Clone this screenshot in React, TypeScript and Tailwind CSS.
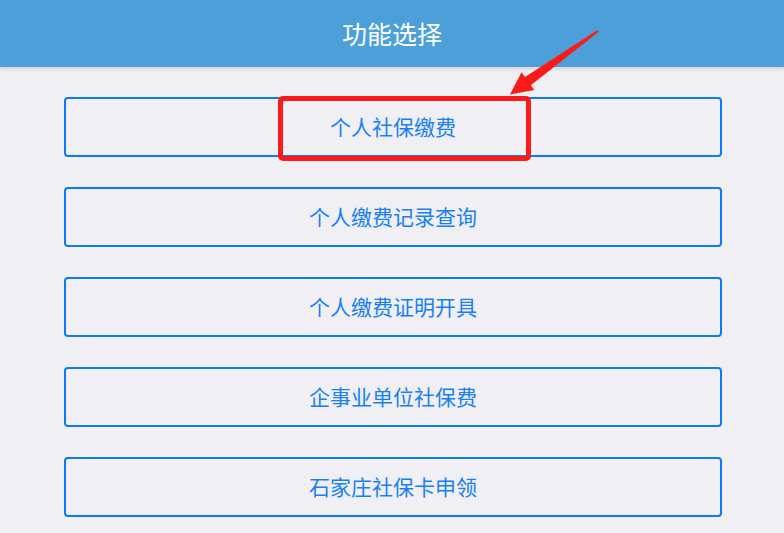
const items = [
  "个人社保缴费",
  "个人缴费记录查询",
  "个人缴费证明开具",
  "企事业单位社保费",
  "石家庄社保卡申领",
];

const App = () => {
  return (
    <div
      className="relative w-[784px] h-[533px] overflow-hidden bg-[#efeff4]"
      style={{ fontFamily: '"Noto Sans CJK SC", "Noto Sans", sans-serif' }}
    >
      <header className="h-[67px] bg-[#4d9fda] flex items-center justify-center shadow-[0_2px_4px_rgba(0,0,0,0.12)]">
        <h1 className="text-[25px] text-white leading-none">功能选择</h1>
      </header>

      <div className="flex flex-col gap-[30px] pt-[30px] px-[64px]">
        {items.map((label) => (
          <button
            key={label}
            className="h-[60px] w-[658px] rounded-[4px] border-2 border-[#0a7bff] flex items-center justify-center text-[21px] text-[#1a7ff5]"
          >
            {label}
          </button>
        ))}
      </div>

      {/* annotation */}
      <div className="absolute left-[278px] top-[96px] w-[253px] h-[65px] rounded-[5px] border-[5px] border-[#ff1a1a]" />
      <svg
        className="absolute left-0 top-0"
        width="784"
        height="533"
        viewBox="0 0 784 533"
      >
        <polygon
          points="597.2,30.2 598.8,31.8 530.8,85.3 534.3,90.1 510,94.5 521.5,72.3 525,77.1"
          fill="#ff1a1a"
        />
      </svg>
    </div>
  );
};

export default App;
